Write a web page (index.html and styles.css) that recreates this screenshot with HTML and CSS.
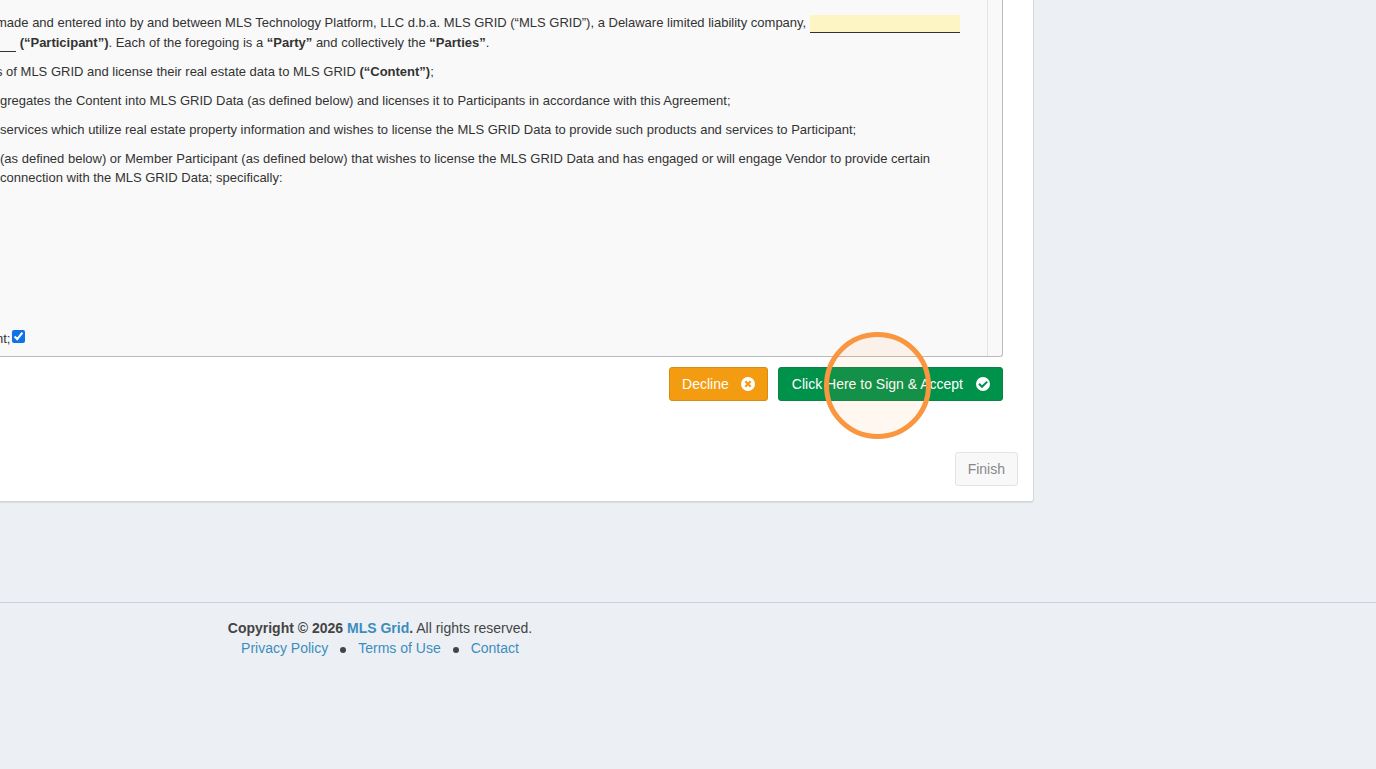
FILE: index.html
```html
<!DOCTYPE html>
<html lang="en">
<head>
    <meta charset="UTF-8">
    <meta name="viewport" content="width=device-width, initial-scale=1.0">
    <title>MLS Grid | Sign Agreement</title>
    <link rel="stylesheet" href="styles.css">
</head>
<body>
    <main class="content">
        <section class="card">
            <div class="document-wrapper">
                <div class="document">
                    <p class="clipped">made and entered into by and between MLS Technology Platform, LLC d.b.a. MLS GRID (“MLS GRID”), a Delaware limited liability company, <input type="text" class="blank-field" aria-label="Participant name"></p>
                    <p class="continued"><span class="blank-line"></span> <strong>(“Participant”)</strong>. Each of the foregoing is a <strong>“Party”</strong> and collectively the <strong>“Parties”</strong>.</p>
                    <p class="clipped">s of MLS GRID and license their real estate data to MLS GRID <strong>(“Content”)</strong>;</p>
                    <p>gregates the Content into MLS GRID Data (as defined below) and licenses it to Participants in accordance with this Agreement;</p>
                    <p>services which utilize real estate property information and wishes to license the MLS GRID Data to provide such products and services to Participant;</p>
                    <p>(as defined below) or Member Participant (as defined below) that wishes to license the MLS GRID Data and has engaged or will engage Vendor to provide certain<br>connection with the MLS GRID Data; specifically:</p>
                    <div class="option clipped">
                        <label for="participant-option">nt;</label>
                        <input type="checkbox" id="participant-option" checked>
                    </div>
                </div>
            </div>

            <div class="sign-actions">
                <button type="button" class="btn btn-warning">
                    Decline
                    <svg class="icon" viewBox="0 0 14 14" aria-hidden="true">
                        <circle cx="7" cy="7" r="7" fill="#fff"/>
                        <path d="M4.3 4.3l5.4 5.4M9.7 4.3l-5.4 5.4" stroke="#f39c12" stroke-width="2.2"/>
                    </svg>
                </button>
                <div class="click-target">
                    <button type="button" class="btn btn-success">
                        Click Here to Sign &amp; Accept
                        <svg class="icon" viewBox="0 0 14 14" aria-hidden="true">
                            <circle cx="7" cy="7" r="7" fill="#fff"/>
                            <path d="M3 6.8l3 3 5.2-5.2" fill="none" stroke="#00914a" stroke-width="2"/>
                        </svg>
                    </button>
                    <span class="click-ring"></span>
                </div>
            </div>

            <div class="wizard-actions">
                <button type="button" class="btn btn-default" disabled>Finish</button>
            </div>
        </section>
    </main>

    <footer class="footer">
        <div class="footer-inner">
            <div><strong>Copyright © 2026 <a href="#">MLS Grid</a>.</strong> All rights reserved.</div>
            <nav class="footer-links">
                <a href="#">Privacy Policy</a>
                <span class="dot"></span>
                <a href="#">Terms of Use</a>
                <span class="dot"></span>
                <a href="#">Contact</a>
            </nav>
        </div>
    </footer>
</body>
</html>
```
FILE: styles.css
```css
* {
    box-sizing: border-box;
}

body {
    margin: 0;
    background: #ecf0f5;
    color: #333;
    font-family: "Helvetica Neue", "Liberation Sans", Arial, sans-serif;
    font-size: 14px;
    line-height: 20px;
    overflow-x: hidden;
}

a {
    color: #3c8dbc;
    text-decoration: none;
}

.content {
    padding-right: 342px;
    margin-bottom: 100px;
}

.card {
    background: #fff;
    border-right: 1px solid #d5d9de;
    border-bottom: 1px solid #d0d4d9;
    border-bottom-right-radius: 3px;
    box-shadow: 0 1px 1px rgba(0, 0, 0, 0.08);
    padding: 0 15px 15px 0;
}

/* Agreement */
.document-wrapper {
    margin-right: 15px;
    padding-right: 14px;
    background: #f9f9f9;
    border-right: 1px solid #bbb;
    border-bottom: 1px solid #bbb;
    border-bottom-right-radius: 3px;
}

.document {
    padding: 13px 24px 8px 0;
    border-right: 1px solid #e3e3e3;
    font-size: 13px;
    line-height: 19px;
}

.document p {
    margin: 0 0 10px;
    white-space: nowrap;
}

.document .clipped {
    margin-left: -4px;
}

.document .clipped:first-child {
    margin-bottom: 0;
}

.blank-field {
    width: 150px;
    height: 18px;
    padding: 0;
    border: 0;
    border-bottom: 1px solid #333;
    background: #fdf5c4;
    vertical-align: middle;
}

.blank-line {
    display: inline-block;
    width: 16px;
    height: 17px;
    border-bottom: 1px solid #333;
    vertical-align: middle;
}

.option {
    display: flex;
    align-items: center;
    gap: 2px;
    margin-top: 142px;
}

.option input {
    width: 13px;
    height: 13px;
    margin: 0 0 3px;
    accent-color: #0d74e8;
}

/* Buttons */
.sign-actions {
    display: flex;
    justify-content: flex-end;
    gap: 10px;
    margin: 10px 15px 51px 0;
}

.wizard-actions {
    display: flex;
    justify-content: flex-end;
}

.btn {
    display: flex;
    align-items: center;
    gap: 12px;
    height: 34px;
    padding: 0 12px;
    border: 1px solid transparent;
    border-radius: 3px;
    color: #fff;
    font-family: inherit;
    font-size: 14px;
    line-height: 20px;
}

.btn-warning {
    background: #f39c12;
    border-color: #d98b12;
}

.btn-success {
    gap: 13px;
    padding-left: 13px;
    background: #00914a;
    border-color: #0b8343;
}

.btn-default {
    background: #f8f8f8;
    border-color: #e4e4e4;
    color: #888;
}

.icon {
    width: 14px;
    height: 14px;
}

.click-target {
    position: relative;
}

.click-ring {
    position: absolute;
    top: -35px;
    left: 46px;
    width: 107px;
    height: 107px;
    border: 5px solid #f9963f;
    border-radius: 50%;
    background: rgba(249, 150, 63, 0.08);
    pointer-events: none;
}

/* Footer */
.footer {
    padding: 15px 0;
    border-top: 1px solid #cdd2da;
    color: #444;
}

.footer-inner {
    max-width: 760px;
    text-align: center;
}

.footer-links {
    display: flex;
    justify-content: center;
    align-items: center;
    gap: 12px;
}

.dot {
    width: 6px;
    height: 6px;
    margin-top: 4px;
    border-radius: 50%;
    background: #444;
}
```
